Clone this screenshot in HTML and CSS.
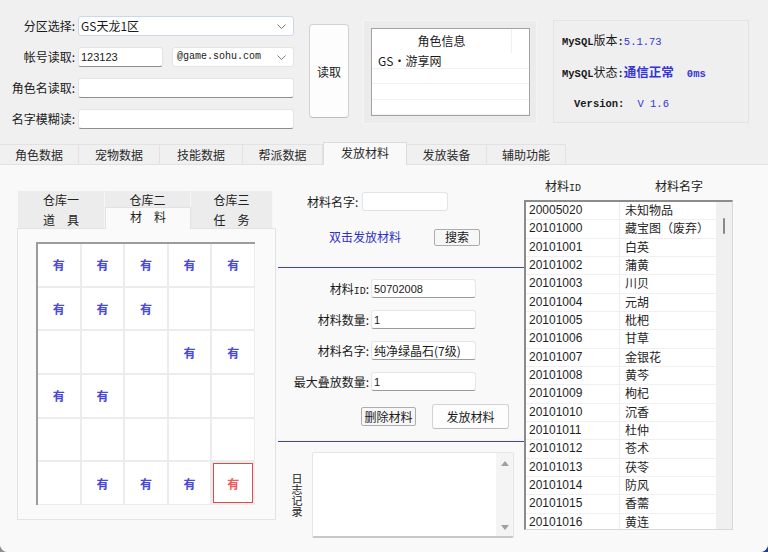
FILE: index.html
```html
<!DOCTYPE html>
<html lang="zh">
<head>
<meta charset="utf-8">
<title>GS 工具</title>
<link rel="stylesheet" href="styles.css">
</head>
<body>
<div class="window">
  <header class="top">
    <div class="acct">
      <div class="frow"><label>分区选择:</label><div class="field combo wide focus"><span>GS天龙1区</span><svg class="chev" width="9" height="5" viewBox="0 0 9 5"><path d="M0.5 0.5 L4.5 4.5 L8.5 0.5" fill="none" stroke="#7a7a7a" stroke-width="1"/></svg></div></div>
      <div class="frow"><label>帐号读取:</label><div class="field short"><span class="num">123123</span></div><div class="field combo mail"><span class="mono">@game.sohu.com</span><svg class="chev" width="9" height="5" viewBox="0 0 9 5"><path d="M0.5 0.5 L4.5 4.5 L8.5 0.5" fill="none" stroke="#7a7a7a" stroke-width="1"/></svg></div></div>
      <div class="frow"><label>角色名读取:</label><div class="field wide"></div></div>
      <div class="frow"><label>名字模糊读:</label><div class="field wide"></div></div>
    </div>
    <button class="btn read">读取</button>
    <div class="role-panel">
      <div class="role-list">
        <div class="role-head"><span>角色信息</span><span></span></div>
        <div class="role-row">GS・游享网</div>
        <div class="role-row"></div>
        <div class="role-row"></div>
        <div class="role-row"></div>
      </div>
    </div>
    <div class="mysql">
      <div class="mline"><span class="mono b">MySQL</span>版本<span class="mono b">:</span><span class="mono blue">5.1.73</span></div>
      <div class="mline l2"><span class="mono b">MySQL</span>状态<span class="mono b">:</span><span class="blue bold">通信正常</span><span class="mono blue ms">0ms</span></div>
      <div class="mline l3"><span class="mono b">Version:</span><span class="mono blue ver">V 1.6</span></div>
    </div>
  </header>

  <nav class="tabs">
    <span class="tab t1">角色数据</span>
    <span class="tab t2">宠物数据</span>
    <span class="tab t3">技能数据</span>
    <span class="tab t4">帮派数据</span>
    <span class="tab t5 active">发放材料</span>
    <span class="tab t6">发放装备</span>
    <span class="tab t7">辅助功能</span>
    <span class="tab-fill"></span>
  </nav>

  <main class="content">
    <section class="store">
      <div class="wtabs">
        <div class="wrow r1"><span class="wtab c1">仓库一</span><span class="wtab c2">仓库二</span><span class="wtab c3">仓库三</span></div>
        <div class="wrow r2"><span class="wtab c1">道　具</span><span class="wtab c2 on">材　料</span><span class="wtab c3">任　务</span></div>
      </div>
      <div class="wbody">
        <div class="grid">
          <div class="cell">有</div><div class="cell">有</div><div class="cell">有</div><div class="cell">有</div><div class="cell">有</div>
          <div class="cell">有</div><div class="cell">有</div><div class="cell">有</div><div class="cell"></div><div class="cell"></div>
          <div class="cell"></div><div class="cell"></div><div class="cell"></div><div class="cell">有</div><div class="cell">有</div>
          <div class="cell">有</div><div class="cell">有</div><div class="cell"></div><div class="cell"></div><div class="cell"></div>
          <div class="cell"></div><div class="cell"></div><div class="cell"></div><div class="cell"></div><div class="cell"></div>
          <div class="cell"></div><div class="cell">有</div><div class="cell">有</div><div class="cell">有</div><div class="cell sel">有</div>
        </div>
      </div>
    </section>

    <section class="mid">
      <div class="srow"><label>材料名字:</label><div class="field sname"></div></div>
      <div class="arow"><span class="hint">双击发放材料</span><button class="btn small search">搜索</button></div>
      <div class="hline"></div>
      <div class="fields">
        <div class="mrow"><label>材料<span class="mono">ID</span>:</label><div class="field mf"><span class="num">50702008</span></div></div>
        <div class="mrow"><label>材料数量:</label><div class="field mf"><span class="num">1</span></div></div>
        <div class="mrow"><label>材料名字:</label><div class="field mf">纯净绿晶石(7级)</div></div>
        <div class="mrow"><label>最大叠放数量:</label><div class="field mf"><span class="num">1</span></div></div>
      </div>
      <div class="brow"><button class="btn small del">删除材料</button><button class="btn send">发放材料</button></div>
      <div class="hline second"></div>
      <div class="log">
        <span class="vlabel">日志记录</span>
        <div class="logbox"><div class="logtext"></div><div class="vscroll"><span class="up"></span><span class="down"></span></div></div>
      </div>
    </section>

    <section class="list">
      <div class="list-head"><span class="h1">材料<span class="mono">ID</span></span><span class="h2">材料名字</span></div>
      <div class="list-box">
        <div class="rows">
          <div class="row"><span>20005020</span><span>未知物品</span></div>
          <div class="row"><span>20101000</span><span>藏宝图（废弃）</span></div>
          <div class="row"><span>20101001</span><span>白英</span></div>
          <div class="row"><span>20101002</span><span>蒲黄</span></div>
          <div class="row"><span>20101003</span><span>川贝</span></div>
          <div class="row"><span>20101004</span><span>元胡</span></div>
          <div class="row"><span>20101005</span><span>枇杷</span></div>
          <div class="row"><span>20101006</span><span>甘草</span></div>
          <div class="row"><span>20101007</span><span>金银花</span></div>
          <div class="row"><span>20101008</span><span>黄芩</span></div>
          <div class="row"><span>20101009</span><span>枸杞</span></div>
          <div class="row"><span>20101010</span><span>沉香</span></div>
          <div class="row"><span>20101011</span><span>杜仲</span></div>
          <div class="row"><span>20101012</span><span>苍术</span></div>
          <div class="row"><span>20101013</span><span>茯苓</span></div>
          <div class="row"><span>20101014</span><span>防风</span></div>
          <div class="row"><span>20101015</span><span>香薷</span></div>
          <div class="row"><span>20101016</span><span>黄连</span></div>
        </div>
        <div class="lscroll"><span class="thumb"></span></div>
      </div>
    </section>
  </main>
</div>
</body>
</html>
```

FILE: styles.css
```css
* { box-sizing: border-box; }
html { height: 100%; background: linear-gradient(to right, #8e8e8e 50%, #1d3f8f 50%); }
body {
  margin: 0; width: 768px; height: 552px; overflow: hidden;
  font: 12px "Noto Sans CJK SC", "Noto Sans", sans-serif; color: #1a1a1a;
}
.window {
  width: 768px; height: 552px; background: #f0f0f0;
  border-radius: 0 0 8px 8px; overflow: hidden;
  display: flex; flex-direction: column;
}
.mono { font-family: "Liberation Mono", "Noto Sans CJK SC", monospace; font-size: 10px; }
.num { font-family: "Liberation Sans", sans-serif; font-size: 11px; }
.blue { color: #3434d8; }
.bold { font-weight: 700; }
.b { font-weight: 700; }

/* ---------- top ---------- */
.top { height: 142px; display: flex; align-items: flex-start; padding-top: 16px; flex: none; }
.acct { width: 294px; display: flex; flex-direction: column; gap: 11px; }
.frow { display: flex; align-items: center; height: 20px; }
.frow label { width: 78px; padding-right: 3px; text-align: right; line-height: 20px; white-space: nowrap; }
.field {
  height: 20px; background: #fff; border: 1px solid #e4e4e4; border-bottom-color: #8e8e8e;
  border-radius: 3px; padding: 0 2px; line-height: 18px;
  display: flex; align-items: center; justify-content: space-between; white-space: nowrap;
}
.combo { border-bottom-color: #e4e4e4; padding-right: 7px; }
.combo.focus { border-color: #c6d9ee; }
.wide { width: 216px; }
.short { width: 85px; }
.mail { width: 122px; margin-left: 9px; padding-left: 4px; }
.chev { flex: none; }

.btn {
  font: inherit; color: #1a1a1a; background: #fdfdfd;
  border: 1px solid #d2d2d2; border-bottom-color: #bdbdbd; border-radius: 4px; padding: 0;
}
.read { width: 40px; height: 94px; margin: 8px 0 0 15px; }

.role-panel {
  width: 174px; height: 104px; margin: 4px 0 0 14px; padding: 7px;
  background: #ebebeb; border: 1px solid #f4f4f4;
}
.role-list { width: 159px; height: 88px; background: #fff; border: 1px solid #a3a3a3; }
.role-head { display: grid; grid-template-columns: 140px 1fr; height: 24px; line-height: 24px; }
.role-head span:first-child { text-align: center; border-right: 1px solid #f0f0f0; }
.role-row { height: 15.5px; line-height: 15px; padding-left: 6px; border-bottom: 1px solid #f1f1f1; }

.mysql {
  width: 196px; height: 103px; margin: 4px 0 0 16px; padding: 12px 0 0 8px;
  background: #efefef; border: 1px solid #e3e3e3;
}
.mline { height: 14px; line-height: 14px; white-space: nowrap; }
.mline .mono { font-size: 10.5px; }
.l2 { margin-top: 18px; }
.l2 .blue.bold { font-size: 12.5px; }
.ms { margin-left: 13px; font-weight: 700; }
.l3 { margin-top: 16px; padding-left: 12px; }
.ver { margin-left: 13px; }

/* ---------- tabs ---------- */
.tabs { height: 23px; display: flex; align-items: flex-end; flex: none; }
.tab {
  height: 21px; line-height: 20px; text-align: center; color: #2a2a2a;
  background: #f0f0f0; border: 1px solid #e2e2e2; border-left: none; border-bottom-color: #e2e2e2;
}
.t1 { width: 79px; }
.t2 { width: 81px; }
.t3 { width: 83px; }
.t4 { width: 80px; }
.t5 { width: 84px; }
.t6 { width: 80px; }
.t7 { width: 79px; }
.tab.active { height: 23px; line-height: 20px; background: #f9f9f9; border-color: #dcdcdc; border-bottom: none; border-left: 1px solid #dcdcdc; }
.tab-fill { flex: 1; height: 1px; background: #e2e2e2; }

/* ---------- content ---------- */
.content { flex: 1; display: flex; background: #f9f9f9; padding-left: 17px; }

.store { width: 259px; margin-top: 26px; }
.wtabs { padding-left: 1px; }
.wrow { display: flex; }
.r1 { height: 18px; }
.r2 { height: 19px; }
.wtab { background: #ececec; border-right: 1px solid #f6f6f6; text-align: center; line-height: 18px; color: #222; }
.r2 .wtab { line-height: 19px; padding-top: 1px; }
.c1 { width: 87px; }
.c2 { width: 86px; }
.c3 { width: 82px; }
.r2 .wtab.on {
  background: #fafafa; margin-top: -2px; height: 22px; line-height: 17px; padding-top: 0;
  border: 1px solid #e2e2e2; border-bottom: none; position: relative; z-index: 1;
}
.wbody {
  height: 292px; background: #fafafa; border: 1px solid #e3e3e3;
  padding: 13px 0 0 18px;
}
.grid {
  width: 219px; height: 263px; display: grid;
  grid-template-columns: repeat(5, 1fr); grid-template-rows: repeat(6, 1fr);
  gap: 2px; background: #ececec; padding: 0 1px 1px 0;
  border-left: 2px solid #9c9c9c; border-top: 2px solid #9c9c9c;
}
.cell {
  background: #fff; display: flex; align-items: center; justify-content: center;
  color: #4848da; font-weight: 700; font-size: 12px;
}
.cell.sel { border: 1px solid #e04a4a; color: #ef5a5a; margin: 1px; }

.mid { width: 248px; display: flex; flex-direction: column; }
.srow { display: flex; align-items: center; height: 19px; margin-top: 27px; }
.srow label { margin-left: 31px; white-space: nowrap; }
.sname { width: 86px; height: 19px; margin-left: 4px; border-bottom-color: #e0e0e0; }
.arow { display: flex; align-items: center; height: 16px; margin-top: 18px; }
.hint { margin-left: 53px; color: #2f2fc4; line-height: 16px; }
.btn.small { border-color: #adadad; border-radius: 2px; background: #f7f7f7; }
.search { width: 46px; height: 17px; margin-left: 33px; line-height: 14px; }
.hline { height: 1px; background: #3b3be0; margin: 22px 0 0 2px; width: 248px; }
.hline.second { margin-top: 12px; }
.fields { display: flex; flex-direction: column; gap: 12px; margin-top: 11px; }
.mrow { display: flex; align-items: center; height: 19px; }
.mrow label { width: 95px; padding-right: 2px; text-align: right; white-space: nowrap; }
.mf { width: 105px; height: 19px; border-color: #e6e6e6; border-bottom-color: #9a9a9a; }
.brow { display: flex; align-items: center; height: 25px; margin-top: 13px; }
.del { width: 55px; height: 19px; margin-left: 85px; line-height: 16px; }
.send { width: 77px; height: 25px; margin-left: 16px; border-radius: 3px; }
.log { display: flex; align-items: center; margin-top: 10px; height: 86px; }
.vlabel {
  writing-mode: vertical-rl; text-orientation: upright; font-size: 11px; line-height: 11px;
  margin: 0 0 0 15px; color: #222;
}
.logbox {
  width: 202px; height: 86px; margin-left: 10px; display: flex;
  background: #fff; border: 1px solid #e6e6e6; border-bottom: 2px solid #c8c8c8; border-radius: 2px;
}
.logtext { flex: 1; }
.vscroll {
  width: 17px; background: #f4f4f4; display: flex; flex-direction: column;
  justify-content: space-between; align-items: center; padding: 8px 0 6px;
}
.up { width: 0; height: 0; border-left: 4px solid transparent; border-right: 4px solid transparent; border-bottom: 5px solid #a0a0a0; }
.down { width: 0; height: 0; border-left: 4px solid transparent; border-right: 4px solid transparent; border-top: 5px solid #a0a0a0; }

.list { width: 209px; }
.list-head { height: 35px; padding-top: 14px; line-height: 14px; display: flex; white-space: nowrap; color: #222; }
.h1 { padding-left: 21px; width: 96px; }
.h2 { padding-left: 35px; }
.list-box {
  height: 330px; display: flex; background: #fff; overflow: hidden;
  border-left: 2px solid #8c8c8c; border-top: 2px solid #8c8c8c;
  border-right: 1px solid #d8d8d8; border-bottom: 1px solid #d8d8d8;
}
.rows { flex: 1; }
.row {
  display: grid; grid-template-columns: 94px 1fr; height: 18.33px; line-height: 16px;
  border-bottom: 1px solid #f0f0f0; font-family: "Liberation Sans", "Noto Sans CJK SC", sans-serif; font-size: 12px; color: #1e1e1e;
}
.row span:first-child { padding-left: 3px; border-right: 1px solid #ececec; }
.row span:last-child { padding-left: 5px; font-family: "Noto Sans CJK SC", sans-serif; }
.lscroll { width: 16px; background: #f0f0f0; position: relative; }
.thumb { position: absolute; left: 7px; top: 16px; width: 2px; height: 16px; background: #8a8a8a; border-radius: 1px; }
```
